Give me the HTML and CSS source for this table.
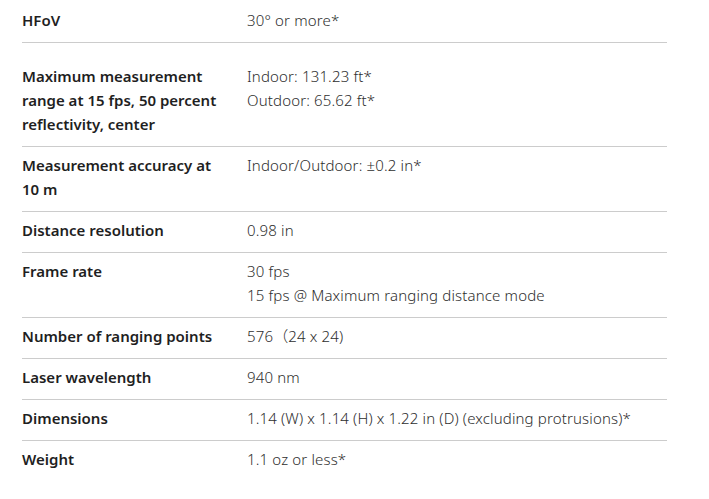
FILE: index.html
```html
<!DOCTYPE html>
<html lang="en">
<head>
<meta charset="utf-8">
<title>Specifications</title>
<link rel="stylesheet" href="styles.css">
</head>
<body>
<div class="specs">
  <div class="row">
    <div class="label">HFoV</div>
    <div class="value">30° or more*</div>
  </div>
  <div class="row row-tall">
    <div class="label">Maximum measurement range at 15 fps, 50 percent reflectivity, center</div>
    <div class="value">Indoor: 131.23 ft*<br>Outdoor: 65.62 ft*</div>
  </div>
  <div class="row">
    <div class="label">Measurement accuracy at 10 m</div>
    <div class="value">Indoor/Outdoor: ±0.2 in*</div>
  </div>
  <div class="row">
    <div class="label">Distance resolution</div>
    <div class="value">0.98 in</div>
  </div>
  <div class="row">
    <div class="label">Frame rate</div>
    <div class="value">30 fps<br>15 fps @ Maximum ranging distance mode</div>
  </div>
  <div class="row">
    <div class="label">Number of ranging points</div>
    <div class="value">576（24 x 24)</div>
  </div>
  <div class="row">
    <div class="label">Laser wavelength</div>
    <div class="value">940 nm</div>
  </div>
  <div class="row">
    <div class="label">Dimensions</div>
    <div class="value">1.14 (W) x 1.14 (H) x 1.22 in (D) (excluding protrusions)*</div>
  </div>
  <div class="row row-last">
    <div class="label">Weight</div>
    <div class="value">1.1 oz or less*</div>
  </div>
</div>
</body>
</html>
```
FILE: styles.css
```css
html, body {
  margin: 0;
  padding: 0;
  background: #ffffff;
}
body {
  font-family: "Noto Sans", "Noto Sans CJK JP", sans-serif;
  font-size: 15px;
  line-height: 24px;
  color: #333333;
}
.specs {
  width: 645px;
  margin-left: 22px;
  padding-top: 2px;
}
.row {
  display: grid;
  grid-template-columns: 225px 1fr;
  padding: 6px 0 10px;
  border-bottom: 1px solid #cccccc;
}
.row-tall {
  padding-top: 21px;
}
.row-last {
  border-bottom: none;
}
.label {
  font-weight: 600;
  color: #1f1f1f;
  padding-right: 24px;
}
.value {
  font-weight: 300;
  letter-spacing: 0.15px;
  color: #2e2e2e;
}
```
